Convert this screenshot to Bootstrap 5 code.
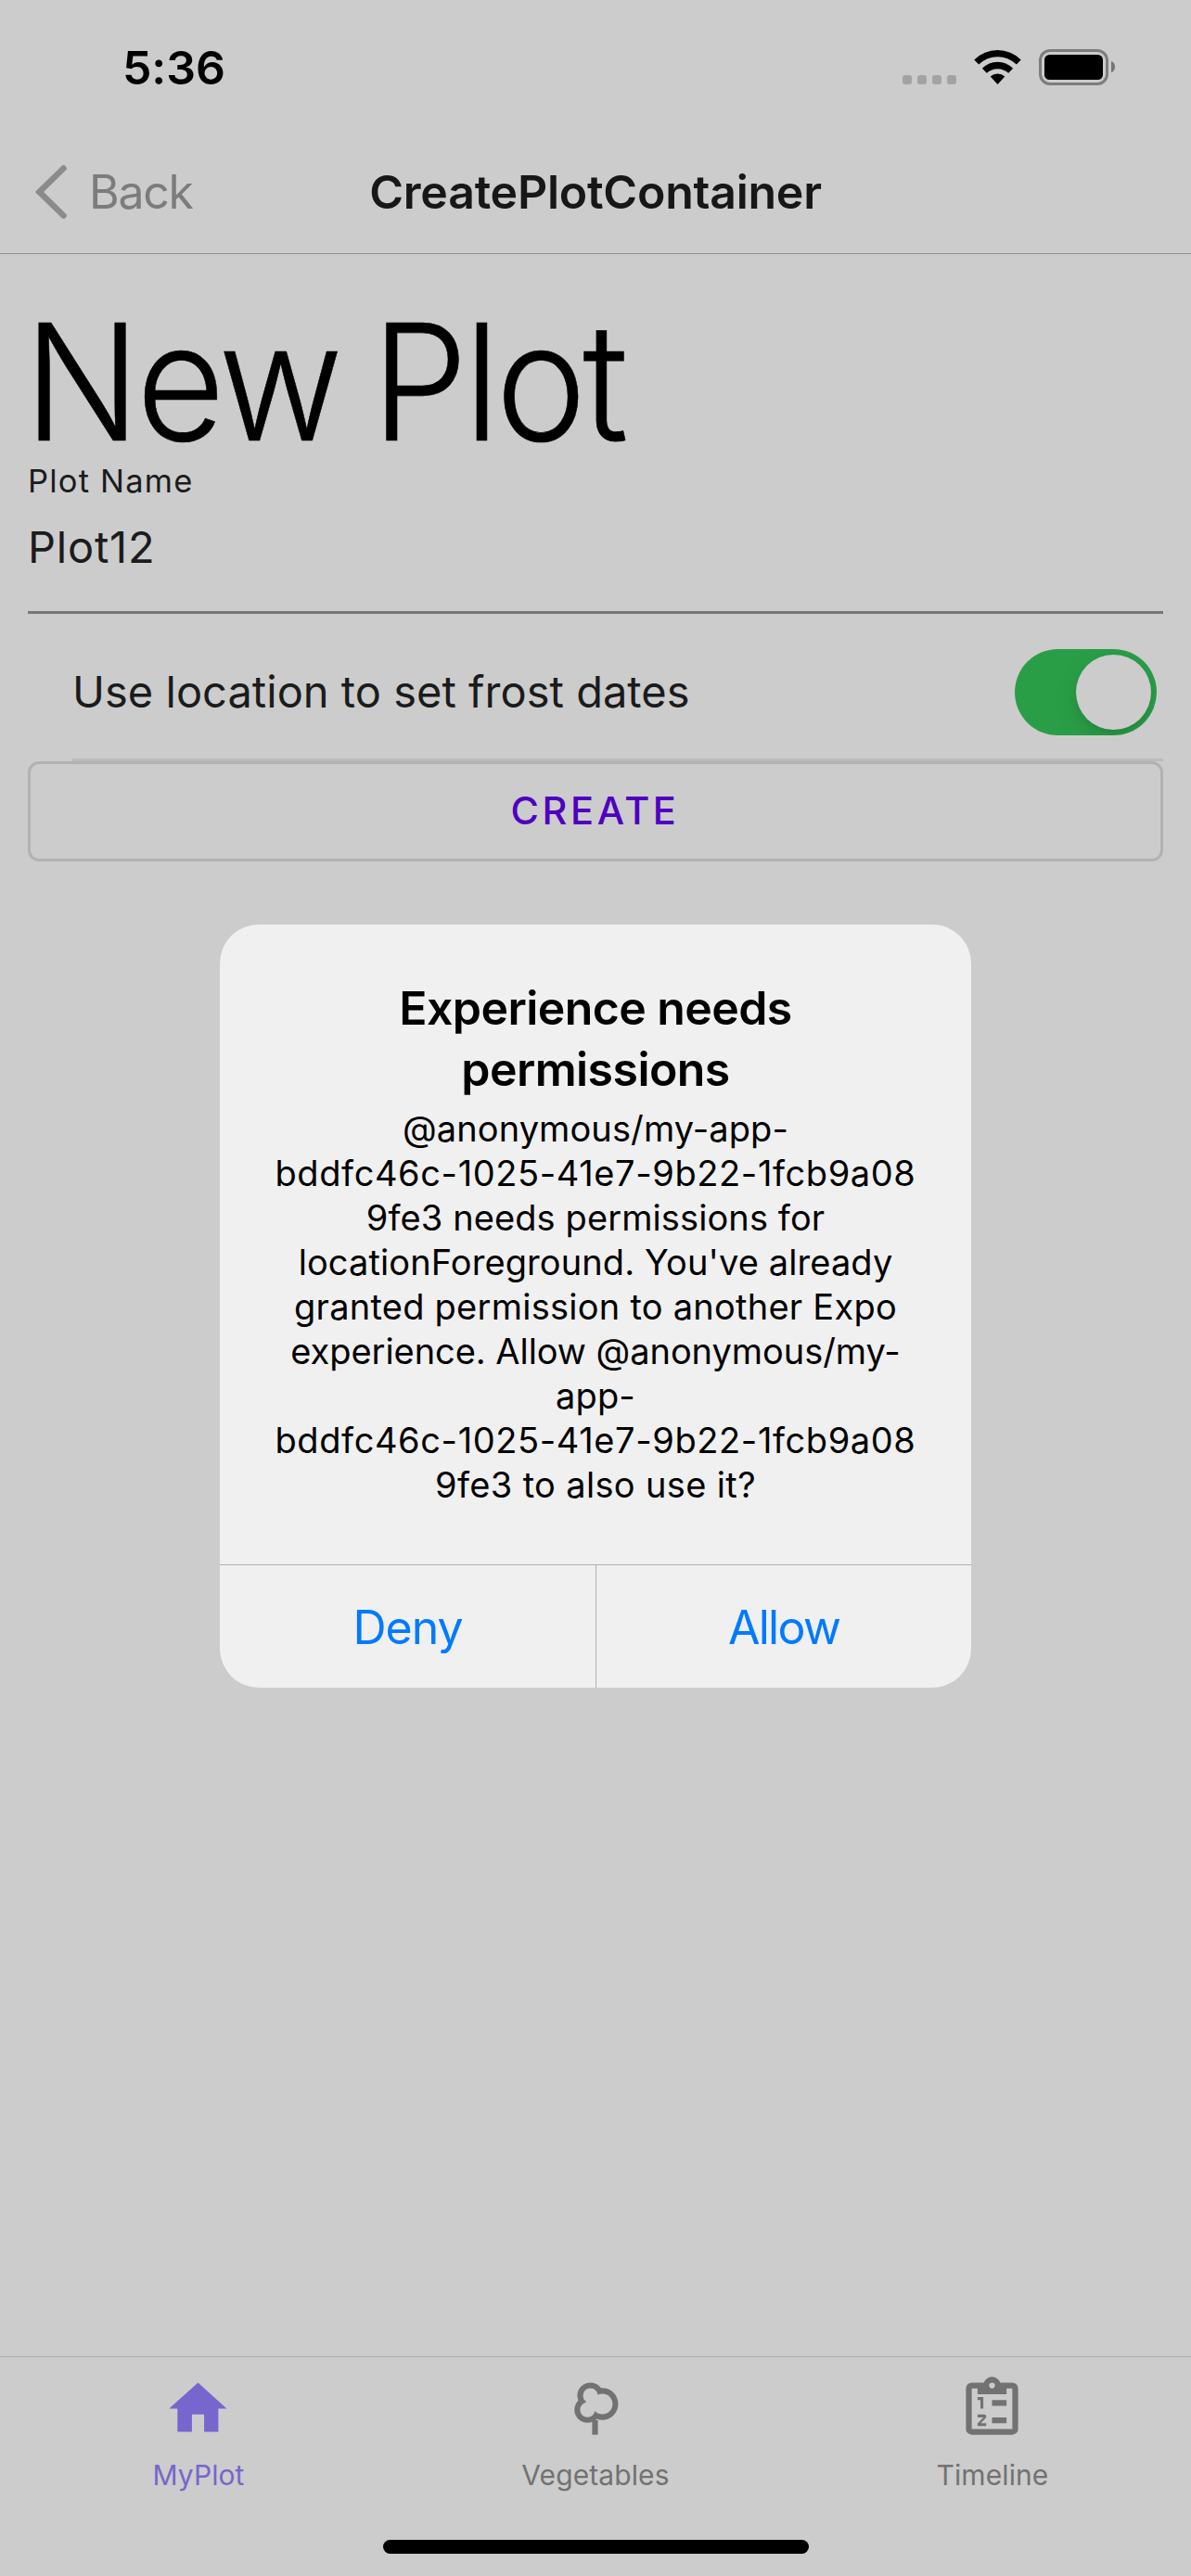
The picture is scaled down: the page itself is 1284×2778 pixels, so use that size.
<!DOCTYPE html>
<html lang="en">
<head>
<meta charset="utf-8">
<meta name="viewport" content="width=device-width, initial-scale=1">
<title>CreatePlotContainer</title>
<link rel="stylesheet" href="https://cdn.jsdelivr.net/npm/bootstrap@5.3.0/dist/css/bootstrap.min.css">
<style>
  body { font-family: Inter, "Liberation Sans", sans-serif; background: #ccc; color: #1b1b1c; }
  svg { display: block; flex: none; }
  .screen { width: 1284px; height: 2778px; background: #ccc; }

  .status-bar { height: 141px; padding: 5px 82px 0 132px; }
  .clock { font-size: 50px; font-weight: 600; line-height: 60px; letter-spacing: -.1px; color: #000; }

  .top-nav { height: 133px; border-bottom: 1px solid #919191; font-size: 50px; line-height: 60px; }
  .nav-side { width: 370px; padding-left: 38px; color: #7c7c7c; letter-spacing: -1.3px; gap: 23px; }
  .nav-heading { font-size: 50px; line-height: 60px; font-weight: 600; letter-spacing: -.24px; color: #171718; }

  .form-area { padding: 57px 30px 0; }
  .big-title { font-size: 175px; line-height: 160px; font-weight: 300; letter-spacing: -4.2px; word-spacing: -8px; margin: 0 0 8px -4px; color: #000; -webkit-text-stroke: .6px #000; transform: scaleX(.941); transform-origin: 0 0; }
  .field-label { font-size: 34.5px; line-height: 40px; letter-spacing: 1.2px; }
  .field-box { height: 123px; padding-top: 21px; border-bottom: 3px solid #777; }
  .field-value { font-size: 47px; line-height: 60px; letter-spacing: .79px; }
  .switch-row { height: 159px; margin-left: 48px; padding: 12px 7px 0 0; border-bottom: 3px solid #bababa; font-size: 47px; line-height: 60px; letter-spacing: .02px; }
  .ios-switch { width: 153px; height: 93px; padding: 6px; border-radius: 47px; background: #2a9e47; overflow: hidden; }
  .ios-knob { width: 81px; height: 81px; border-radius: 50%; background: #ccc; box-shadow: 0 9px 24px rgba(0,0,0,.13), 0 4px 3px rgba(0,0,0,.04); }
  .create-btn { height: 108px; border: 3px solid #b2b2b2; border-radius: 12px; padding: 0 1px 2px 0; color: #5000c0; font-size: 41.5px; font-weight: 500; line-height: 50px; letter-spacing: 3.6px; }

  .alert-box { left: 237px; top: 997px; width: 810px; height: 823px; border-radius: 42px; background: #f0f0f0; color: #000; }
  .alert-text { height: 690px; padding-top: 57px; }
  .alert-title { font-size: 50px; line-height: 66px; font-weight: 600; letter-spacing: -.58px; margin: 0 0 7px; }
  .alert-msg { font-size: 38px; line-height: 48px; letter-spacing: .1px; margin: 0; }
  .ls-id { letter-spacing: .6px; }
  .ls-wide { letter-spacing: .35px; }
  .ls-mid { letter-spacing: .25px; }
  .ls-tight { letter-spacing: -.05px; }
  .alert-actions { height: 133px; border-top: 1px solid #b0b0b0; font-size: 50px; line-height: 60px; color: #007aff; }
  .alert-actions span { padding-top: 1px; }
  .deny { width: 406px; letter-spacing: -1px; border-right: 1px solid #b0b0b0; }
  .allow { letter-spacing: -1.7px; }

  .tab-bar { height: 237px; border-top: 1px solid #adadad; color: #727272; }
  .tab-item { padding-top: 18px; font-size: 30px; line-height: 36px; letter-spacing: .1px; }
  .tab-item svg { width: 75px; height: 75px; margin: 0 2px 16px 0; }
  .tab-on { color: #7766cd; }
  .home-bar { width: 459px; height: 15px; border-radius: 8px; background: #000; margin-bottom: 24px; }
</style>
</head>
<body>
<div class="screen d-flex flex-column position-relative overflow-hidden">

  <div class="status-bar d-flex align-items-center justify-content-between">
    <div class="clock">5:36</div>
    <svg width="231" height="40" viewBox="971 53 231 40">
      <g fill="#a3a3a3">
        <rect x="973" y="81" width="10" height="10" rx="3"/><rect x="989" y="81" width="10" height="10" rx="3"/>
        <rect x="1005" y="81" width="10" height="10" rx="3"/><rect x="1021" y="81" width="10" height="10" rx="3"/>
      </g>
      <path d="M1050.3 64.5Q1061 54 1075.5 54T1100.700 64.500L1095.800 69.500Q1087 61.300 1075.500 61.300T1055.200 69.500Z"/>
      <path d="M1058.900 73.800Q1066 66.700 1075.500 66.700T1092.100 73.800L1087.200 78.800Q1082 74.200 1075.500 74.200T1063.800 78.800Z"/>
      <path d="M1067.700 82.600Q1071 79.500 1075.500 79.500T1083.300 82.600L1075.500 91Z"/>
      <rect x="1121.500" y="54.500" width="72" height="36" rx="10.500" fill="none" stroke="#7d7d7d" stroke-width="3"/>
      <rect x="1126" y="59" width="63" height="27" rx="5.500"/>
      <path d="M1198 66q4 1.600 4 6t-4 6.200z" fill="#737373"/>
    </svg>
  </div>

  <nav class="top-nav d-flex align-items-center">
    <div class="nav-side d-flex align-items-center">
      <svg width="35" height="58" viewBox="0 0 35 58"><path d="M30.500 3.500L4.500 29L30.500 54.500" fill="none" stroke="#8b8b8b" stroke-width="6.500" stroke-linecap="round" stroke-linejoin="miter"/></svg>
      <span>Back</span>
    </div>
    <div class="nav-heading flex-fill text-center">CreatePlotContainer</div>
    <div class="nav-side"></div>
  </nav>

  <main class="form-area flex-grow-1">
    <h1 class="big-title text-nowrap">New Plot</h1>
    <div class="field-label">Plot Name</div>
    <div class="field-box"><div class="field-value">Plot12</div></div>
    <div class="switch-row d-flex align-items-center justify-content-between">
      <span>Use location to set frost dates</span>
      <div class="ios-switch d-flex justify-content-end"><div class="ios-knob"></div></div>
    </div>
    <div class="create-btn d-flex align-items-center justify-content-center">CREATE</div>
  </main>

  <footer class="tab-bar d-flex flex-column align-items-center justify-content-between">
    <div class="d-flex w-100">
      <div class="tab-item tab-on col-4 d-flex flex-column align-items-center">
        <svg viewBox="0 0 24 24" fill="currentColor"><path d="M9.900 20v-6h4.200v6H19v-8h2.900L12 3 2 12h2.900v8z"/></svg>
        <span>MyPlot</span>
      </div>
      <div class="tab-item col-4 d-flex flex-column align-items-center">
        <svg viewBox="0 0 24 24" fill="currentColor">
          <mask id="canopy" maskUnits="userSpaceOnUse" x="0" y="0" width="24" height="24">
            <rect width="24" height="24" fill="#fff"/>
            <g fill="#000">
              <circle cx="10.400" cy="7.500" r="2.550"/><circle cx="14.500" cy="10.400" r="3.550"/><circle cx="9.400" cy="12.400" r="2.550"/>
              <path d="M10.400 7.500L12.850 7.200L14.500 10.400L11.800 12.900L9.400 12.400L8.750 9.600Z"/>
            </g>
          </mask>
          <g mask="url(#canopy)"><circle cx="10.400" cy="7.500" r="4.500"/><circle cx="14.500" cy="10.400" r="5.500"/><circle cx="9.400" cy="12.400" r="4.500"/></g>
          <path d="M11 16h2v5h-2z"/>
        </svg>
        <span>Vegetables</span>
      </div>
      <div class="tab-item col-4 d-flex flex-column align-items-center">
        <svg viewBox="0 0 24 24" fill="currentColor">
          <path fill-rule="evenodd" d="M19 3h-4.180C14.400 1.840 13.300 1 12 1s-2.400.84-2.820 2H5a2 2 0 0 0-2 2v14a2 2 0 0 0 2 2h14a2 2 0 0 0 2-2V5a2 2 0 0 0-2-2zM12 3a1 1 0 0 1 0 2 1 1 0 0 1 0-2zM7 7h10V5h2v14H5V5h2z"/>
          <path d="M12 9h5v2h-5zM12 15h5v2h-5zM7 8h2v4H8V9H7zM9.250 14a.75.75 0 0 1 .75.75c0 .2-.08.39-.21.52L8.120 17H10v1H7v-.92L9 15H7v-1z"/>
        </svg>
        <span>Timeline</span>
      </div>
    </div>
    <div class="home-bar"></div>
  </footer>

  <div class="alert-box position-absolute overflow-hidden text-center" role="dialog">
    <div class="alert-text">
      <h2 class="alert-title">Experience needs<br>permissions</h2>
      <p class="alert-msg text-nowrap">@anonymous/my-app-<br><span class="ls-id">bddfc46c-1025-41e7-9b22-1fcb9a08</span><br>9fe3 needs permissions for<br>locationForeground. You've already<br><span class="ls-mid">granted permission to another Expo</span><br><span class="ls-tight">experience. Allow @anonymous/my-</span><br>app-<br><span class="ls-id">bddfc46c-1025-41e7-9b22-1fcb9a08</span><br><span class="ls-wide">9fe3 to also use it?</span></p>
    </div>
    <div class="alert-actions d-flex">
      <div class="deny d-flex align-items-center justify-content-center"><span>Deny</span></div>
      <div class="allow flex-fill d-flex align-items-center justify-content-center"><span>Allow</span></div>
    </div>
  </div>
</div>
<script src="https://cdn.jsdelivr.net/npm/bootstrap@5.3.0/dist/js/bootstrap.bundle.min.js"></script>
</body>
</html>
